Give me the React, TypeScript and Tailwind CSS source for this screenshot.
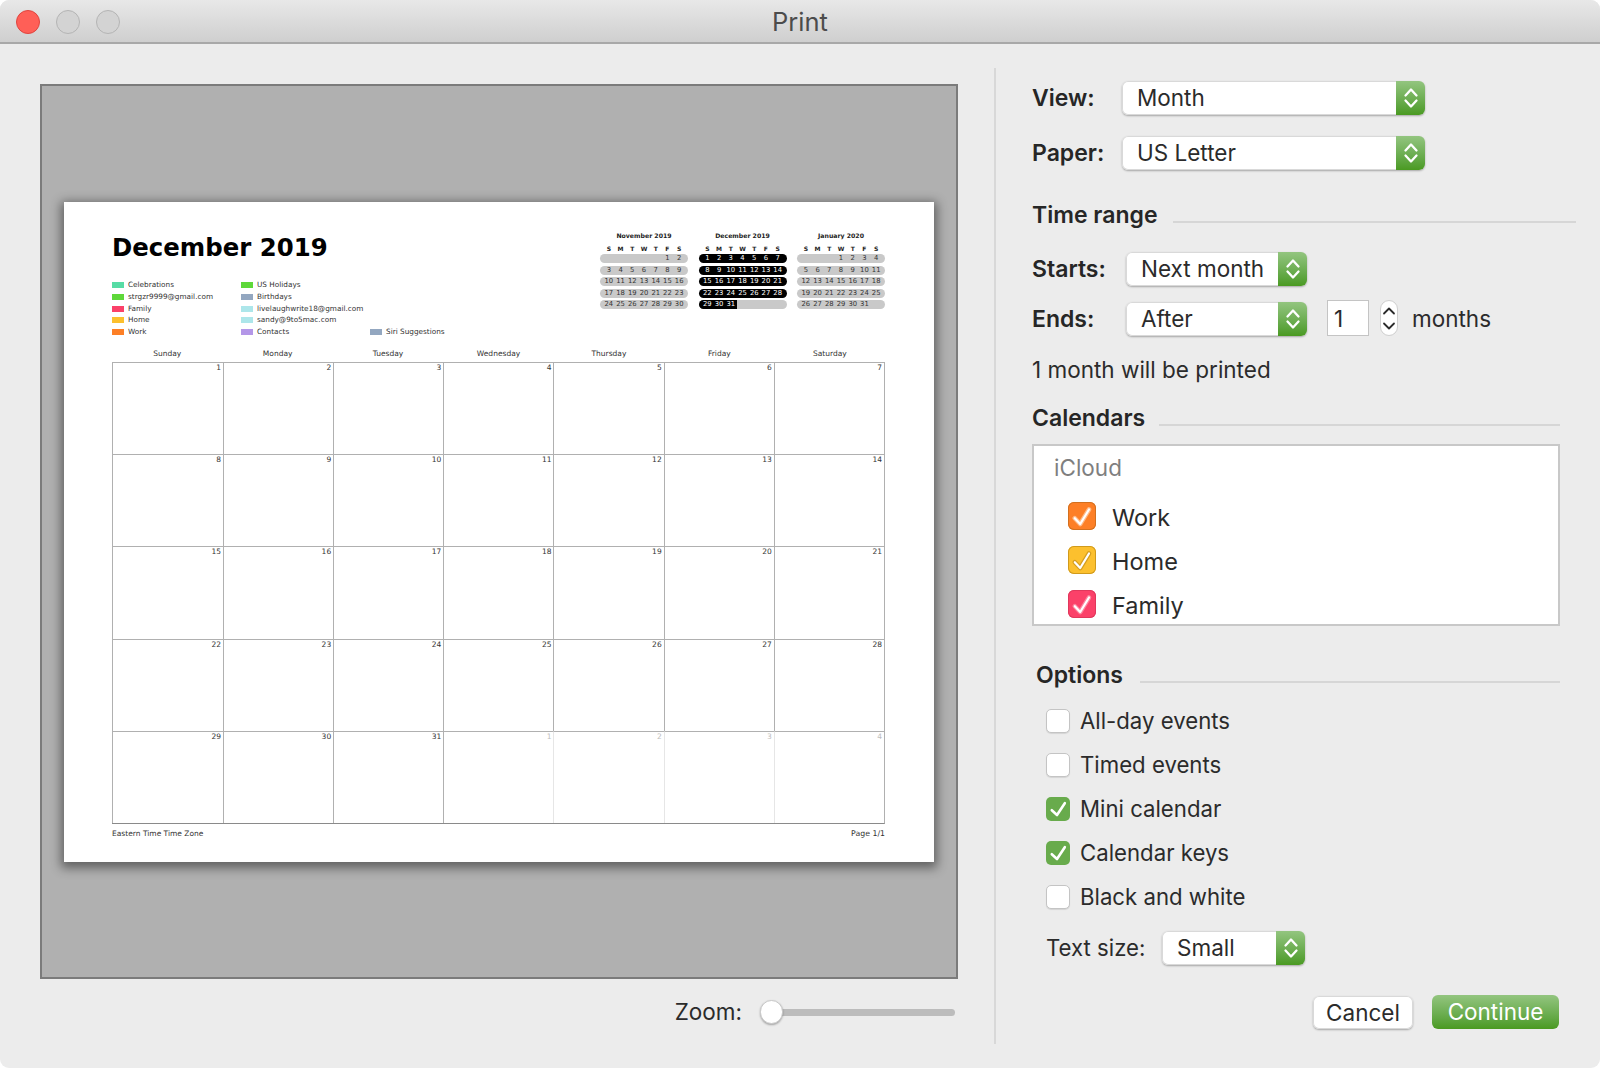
import type { ReactNode } from "react";

const uiFont = "font-['Inter','Noto_Sans',sans-serif]";
const pageFont = "font-['DejaVu_Sans',sans-serif]";

function Chevrons() {
  return (
    <svg viewBox="0 0 16 24" className="h-[24px] w-[16px]" fill="none" stroke="currentColor" strokeWidth={2.3} strokeLinecap="round" strokeLinejoin="round">
      <path d="M2.5 9.5 8 3.5l5.5 6" />
      <path d="M2.5 14.5 8 20.5l5.5-6" />
    </svg>
  );
}

function Select({ value, width }: { value: string; width: string }) {
  return (
    <div className={`flex h-[34px] ${width} rounded-[6px] bg-white shadow-[inset_0_0_0_1px_#d9d9d9,0_1px_2px_rgba(0,0,0,0.3)]`}>
      <div className="flex-1 pl-[15px] text-[22.5px] leading-[34px] text-[#2b2b2b]">{value}</div>
      <div className="flex w-[29px] items-center justify-center rounded-r-[6px] bg-gradient-to-b from-[#93c57f] to-[#4a9a20] text-white">
        <Chevrons />
      </div>
    </div>
  );
}

function Heading({ label, lineClass, className }: { label: string; lineClass: string; className?: string }) {
  return (
    <div className={`flex h-[30px] items-center ${className ?? ""}`}>
      <span className="text-[23px] font-semibold text-[#262626]">{label}</span>
      <div className={`mt-[14px] h-[2px] flex-1 bg-[#d6d6d6] ${lineClass}`} />
    </div>
  );
}

const calendarRows = [
  { name: "Work", box: "bg-[#fd7f26] shadow-[inset_0_0_0_1px_#d2701f]", under: "rgba(255,235,215,0.55)" },
  { name: "Home", box: "bg-[#fcc02e] shadow-[inset_0_0_0_1px_#d09a1c]", under: "rgba(180,130,20,0.55)" },
  { name: "Family", box: "bg-[#fb4169] shadow-[inset_0_0_0_1px_#e0385c]", under: "rgba(255,215,225,0.45)" },
];

const optionRows = [
  { name: "All-day events", on: false },
  { name: "Timed events", on: false },
  { name: "Mini calendar", on: true },
  { name: "Calendar keys", on: true },
  { name: "Black and white", on: false },
];

function Option({ name, on }: { name: string; on: boolean }) {
  return (
    <div className="flex h-[24px] items-center gap-[10px]">
      {on ? (
        <div className="h-[24px] w-[24px] rounded-[5px] bg-[#68ab4c]">
          <svg viewBox="0 0 24 24" className="h-[24px] w-[24px]" fill="none" stroke="#fff" strokeWidth={2.6} strokeLinecap="round" strokeLinejoin="round">
            <path d="M5.8 13.2 11 18 18.8 6.2" />
          </svg>
        </div>
      ) : (
        <div className="h-[24px] w-[24px] rounded-[5px] border border-[#c4c4c4] bg-white shadow-[0_1px_1px_rgba(0,0,0,0.1)]" />
      )}
      <span className="text-[22.2px] text-[#2b2b2b]">{name}</span>
    </div>
  );
}

const legend: { name: string; color: string }[][] = [
  [
    { name: "Celebrations", color: "bg-[#57dca5]" },
    { name: "strgzr9999@gmail.com", color: "bg-[#5ed83a]" },
    { name: "Family", color: "bg-[#fb4169]" },
    { name: "Home", color: "bg-[#fcc02e]" },
    { name: "Work", color: "bg-[#fd7f26]" },
  ],
  [
    { name: "US Holidays", color: "bg-[#5ed83a]" },
    { name: "Birthdays", color: "bg-[#93a7c0]" },
    { name: "livelaughwrite18@gmail.com", color: "bg-[#ade6ea]" },
    { name: "sandy@9to5mac.com", color: "bg-[#ade6ea]" },
    { name: "Contacts", color: "bg-[#b497e8]" },
  ],
  [{ name: "Siri Suggestions", color: "bg-[#93a7c0]" }],
];

function weeks(blank: number, total: number) {
  const cells: (number | null)[] = [...Array(blank).fill(null)];
  for (let d = 1; d <= total; d++) cells.push(d);
  while (cells.length % 7) cells.push(null);
  const out: (number | null)[][] = [];
  for (let i = 0; i < cells.length; i += 7) out.push(cells.slice(i, i + 7));
  return out;
}

function MiniMonth({ title, blank, total, active }: { title: string; blank: number; total: number; active?: boolean }) {
  return (
    <div className="w-[88px]">
      <div className="-mt-[1px] text-center text-[6.2px] font-bold leading-[14px] text-[#222]">{title}</div>
      <div className="grid grid-cols-7 px-[3px] text-center text-[6px] font-bold leading-[11px] text-[#222]">
        {["S", "M", "T", "W", "T", "F", "S"].map((d, i) => (
          <span key={i}>{d}</span>
        ))}
      </div>
      <div className="flex flex-col gap-[2.6px]">
        {weeks(blank, total).map((week, i) => {
          const filled = week.filter((d) => d !== null).length;
          const partial = active && filled < 7;
          return (
            <div key={i} className={`relative h-[9px] overflow-hidden rounded-full ${active && !partial ? "bg-black" : "bg-[#c9c9c9]"}`}>
              {partial && <div className="absolute inset-y-0 left-0 w-[38px] bg-black" />}
              <div className="relative grid grid-cols-7 px-[3px] text-center text-[6.8px] leading-[9px]">
                {week.map((d, j) => (
                  <span key={j} className={active ? "text-white" : "text-[#333]"}>
                    {d}
                  </span>
                ))}
              </div>
            </div>
          );
        })}
      </div>
    </div>
  );
}

function PreviewPage() {
  const days: number[] = [];
  for (let d = 1; d <= 31; d++) days.push(d);
  days.push(1, 2, 3, 4);
  return (
    <div className={`h-[660px] w-[870px] bg-white pl-[48px] pr-[49px] pt-[28px] shadow-[0_3px_10px_3px_rgba(0,0,0,0.45)] ${pageFont}`}>
      <div className="flex h-[117px] justify-between">
        <div>
          <div className="text-[24.4px] font-bold leading-[36px] text-black">December 2019</div>
          <div className="mt-[13px] flex h-[59px] text-[7.3px] leading-[11.8px] text-[#333]">
            {legend.map((col, i) => (
              <div key={i} className="flex w-[129px] flex-col justify-end">
                {col.map((item) => (
                  <div key={item.name} className="flex h-[11.8px] items-center gap-[4px] whitespace-nowrap">
                    <span className={`h-[6px] w-[12px] shrink-0 ${item.color}`} />
                    {item.name}
                  </div>
                ))}
              </div>
            ))}
          </div>
        </div>
        <div className="flex gap-[10.5px]">
          <MiniMonth title="November 2019" blank={5} total={30} />
          <MiniMonth title="December 2019" blank={0} total={31} active />
          <MiniMonth title="January 2020" blank={3} total={31} />
        </div>
      </div>
      <div className="grid h-[15px] grid-cols-7 text-center text-[7.5px] leading-[14px] text-[#333]">
        {["Sunday", "Monday", "Tuesday", "Wednesday", "Thursday", "Friday", "Saturday"].map((d) => (
          <span key={d}>{d}</span>
        ))}
      </div>
      <div className="grid grid-cols-[111px_repeat(6,1fr)] border-b border-r border-b-[#8a8a8a] border-r-[#b0b0b0]">
        {days.map((d, i) => (
          <div
            key={i}
            className={`h-[92.2px] border-t border-l border-t-[#b0b0b0] pr-[2px] text-right text-[7.5px] leading-[9px] ${
              i >= 32 ? "border-l-[#e6e6e6]" : "border-l-[#b0b0b0]"
            } ${i >= 31 ? "text-[#bdbdbd]" : "text-[#333]"}`}
          >
            {d}
          </div>
        ))}
      </div>
      <div className="mt-[5px] flex justify-between text-[7.5px] leading-[10px] text-[#333]">
        <span>Eastern Time Time Zone</span>
        <span className="text-[7.8px]">Page 1/1</span>
      </div>
    </div>
  );
}

function Row({ children, className }: { children: ReactNode; className?: string }) {
  return <div className={`flex h-[34px] items-center ${className ?? ""}`}>{children}</div>;
}

export default function App() {
  return (
    <div className="h-[1068px] w-[1600px] bg-white">
      <div className={`flex h-[1068px] flex-col overflow-hidden rounded-[9px] bg-[#ececec] ${uiFont}`}>
        <div className="relative flex h-[44px] shrink-0 items-center justify-center border-b-2 border-[#a8a8a8] bg-gradient-to-b from-[#e8e8e8] to-[#cfcfcf]">
          <div className="absolute left-[16px] top-[10px] flex gap-[16px]">
            <span className="h-[24px] w-[24px] rounded-full border border-[#e0443e] bg-[#ff5f57]" />
            <span className="h-[24px] w-[24px] rounded-full border border-[#b4b4b4] bg-[#d3d3d3]" />
            <span className="h-[24px] w-[24px] rounded-full border border-[#b4b4b4] bg-[#d3d3d3]" />
          </div>
          <span className="mt-[3px] text-[25.5px] text-[#4c4c4c]">Print</span>
        </div>

        <div className="flex flex-1">
          <div className="w-[994px] shrink-0 pl-[40px] pt-[40px]">
            <div className="h-[895px] w-[918px] border-2 border-[#7b7b7b] bg-[#b0b0b0] pl-[22px] pt-[116px]">
              <PreviewPage />
            </div>
            <div className="mt-[18px] flex h-[30px] w-[915px] items-center justify-end">
              <span className="text-[22.5px] text-[#2b2b2b]">Zoom:</span>
              <div className="ml-[18px] flex w-[195px] items-center">
                <div className="z-10 h-[24px] w-[23px] rounded-full border border-[#c8c8c8] bg-white shadow-[0_1px_2px_rgba(0,0,0,0.3)]" />
                <div className="-ml-[2px] h-[7px] flex-1 rounded-r-full bg-[#bcbcbc]" />
              </div>
            </div>
          </div>

          <div className="mt-[24px] h-[976px] w-[2px] bg-[#d8d8d8]" />

          <div className="w-[544px] pl-[36px] pt-[37px] box-content">
            <Row>
              <span className="w-[90px] text-[23px] font-semibold text-[#262626]">View:</span>
              <Select value="Month" width="w-[303px]" />
            </Row>
            <Row className="mt-[21px]">
              <span className="w-[90px] text-[23px] font-semibold text-[#262626]">Paper:</span>
              <Select value="US Letter" width="w-[303px]" />
            </Row>

            <Heading label="Time range" lineClass="ml-[15px]" className="mt-[30px]" />
            <Row className="mt-[22px]">
              <span className="w-[94px] text-[23px] font-semibold text-[#262626]">Starts:</span>
              <Select value="Next month" width="w-[181px]" />
            </Row>
            <Row className="mt-[16px]">
              <span className="w-[94px] text-[23px] font-semibold text-[#262626]">Ends:</span>
              <Select value="After" width="w-[181px]" />
              <div className="mb-[2px] ml-[20px] h-[36px] w-[42px] border border-[#c4c4c4] bg-white pl-[6px] text-[22.5px] leading-[36px] text-[#2b2b2b]">1</div>
              <div className="mb-[2px] ml-[11px] h-[36px] w-[18px] rounded-full border border-[#cfcfcf] bg-white text-[#2b2b2b]">
                <svg viewBox="0 0 16 34" className="h-[34px] w-[16px]" fill="none" stroke="currentColor" strokeWidth={1.8} strokeLinecap="round" strokeLinejoin="round">
                  <path d="M3 12.5 8 7.5l5 5" />
                  <path d="M3 22.5 8 27.5l5-5" />
                </svg>
              </div>
              <span className="ml-[14px] text-[22.5px] text-[#2b2b2b]">months</span>
            </Row>
            <div className="mt-[19px] h-[30px] text-[22.5px] leading-[30px] text-[#2b2b2b]">1 month will be printed</div>

            <div className="w-[528px]">
              <Heading label="Calendars" lineClass="ml-[14px]" className="mt-[18px]" />
              <div className="mt-[11px] h-[182px] overflow-hidden border-2 border-[#c8c8c8] bg-white pl-[20px] pt-[7px]">
                <div className="h-[30px] text-[22.5px] leading-[30px] text-[#7f7f7f]">iCloud</div>
                <div className="mt-[19px] flex flex-col gap-[16px] pl-[14px]">
                  {calendarRows.map((c) => (
                    <div key={c.name} className="flex h-[28px] items-center gap-[16px]">
                      <div className={`h-[28px] w-[28px] rounded-[6px] ${c.box}`}>
                        <svg viewBox="0 0 28 28" className="h-[28px] w-[28px]" fill="none" strokeLinecap="round" strokeLinejoin="round">
                          <path d="M6.8 16.2 12.2 22 21 7.5" stroke={c.under} strokeWidth={4.6} />
                          <path d="M6.8 16.2 12.2 22 21 7.5" stroke="#fff" strokeWidth={2.2} />
                        </svg>
                      </div>
                      <span className="mt-[3px] text-[23.5px] text-[#2b2b2b]">{c.name}</span>
                    </div>
                  ))}
                </div>
              </div>

              <Heading label="Options" lineClass="ml-[17px]" className="ml-[4px] mt-[34px]" />
              <div className="ml-[14px] mt-[19px] flex flex-col gap-[20px]">
                {optionRows.map((o) => (
                  <Option key={o.name} name={o.name} on={o.on} />
                ))}
              </div>
              <Row className="ml-[14px] mt-[22px]">
                <span className="w-[116px] text-[22.2px] text-[#2b2b2b]">Text size:</span>
                <Select value="Small" width="w-[143px]" />
              </Row>
              <div className="mr-[1px] mt-[30px] flex items-center justify-end gap-[19px]">
                <button className="h-[33px] w-[100px] rounded-[6px] bg-white text-[22.5px] leading-[31px] text-[#2b2b2b] shadow-[inset_0_0_0_1px_#d9d9d9,0_1px_2px_rgba(0,0,0,0.3)]">Cancel</button>
                <button className="h-[34px] w-[127px] rounded-[6px] bg-gradient-to-b from-[#93c57f] to-[#4a9a20] text-[22.5px] leading-[34px] text-white">Continue</button>
              </div>
            </div>
          </div>
        </div>
      </div>
    </div>
  );
}
